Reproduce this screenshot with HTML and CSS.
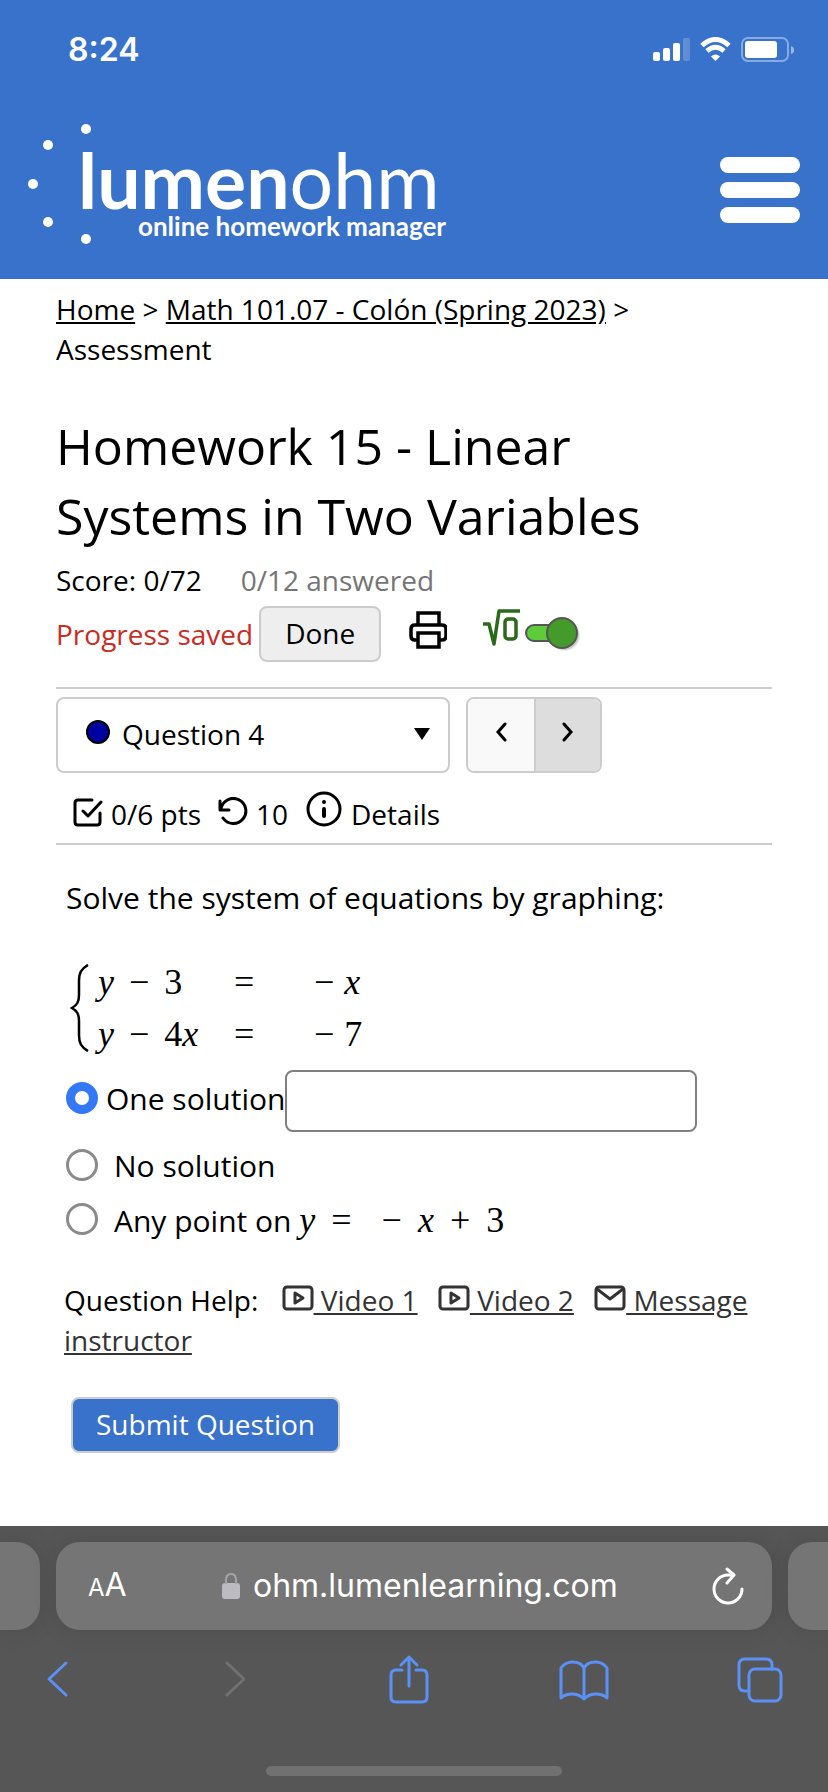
FILE: index.html
```
<!DOCTYPE html>
<html lang="en">
<head>
  <meta charset="UTF-8">
  <meta name="viewport" content="width=device-width, initial-scale=1.0">
  <title>Homework 15 - Linear Systems in Two Variables</title>
  <link rel="stylesheet" href="styles.css">
</head>
<body>
  <header class="header">
    <div class="status">
      <span class="time">8:24</span>
      <svg class="status-icons" width="142" height="26" viewBox="0 0 142 26" fill="#fff">
        <rect x="0" y="15" width="7" height="9" rx="2"/>
        <rect x="10" y="11" width="7" height="13" rx="2"/>
        <rect x="20" y="6" width="7" height="18" rx="2"/>
        <rect x="30" y="1" width="7" height="23" rx="2" opacity=".2"/>
        <path d="M49 8.500Q62.500-3.500 76 8.500" fill="none" stroke="#fff" stroke-width="5"/>
        <path d="M54 14Q62.500 6.500 71 14" fill="none" stroke="#fff" stroke-width="5"/>
        <path d="M58 19.500Q62.500 15.500 67 19.500L62.500 24z"/>
        <rect x="89" y="1" width="46" height="23" rx="6" fill="none" stroke="#fff" stroke-width="2" opacity=".4"/>
        <rect x="92" y="4" width="32" height="17" rx="3"/>
        <path d="M138 9v8q3-1 3-4t-3-4z" opacity=".5"/>
      </svg>
    </div>
    <div class="brand">
      <a class="logo" href="#">
        <svg class="dots" width="64" height="120" viewBox="0 0 64 120" fill="#fff">
          <circle cx="58" cy="5" r="5"/>
          <circle cx="20" cy="21" r="5"/>
          <circle cx="5" cy="60" r="5"/>
          <circle cx="20" cy="98" r="5"/>
          <circle cx="58" cy="115" r="5"/>
        </svg>
        <span class="wordmark">
          <span class="name"><b>lumen</b>ohm</span>
          <span class="tagline">online homework manager</span>
        </span>
      </a>
      <button class="menu" type="button" aria-label="Menu"><i></i><i></i><i></i></button>
    </div>
  </header>

  <main class="main">
    <nav class="breadcrumb"><a href="#">Home</a> &gt; <a href="#">Math 101.07 - Colón (Spring 2023)</a> &gt; Assessment</nav>
    <h1>Homework 15 - Linear Systems in Two Variables</h1>
    <div class="score"><span>Score: 0/72</span><span class="answered">0/12 answered</span></div>

    <div class="actions">
      <span class="saved">Progress saved</span>
      <button class="done" type="button">Done</button>
      <button class="icon-btn print" type="button" aria-label="Print">
        <svg width="38" height="38" viewBox="0 0 38 38" fill="none" stroke="#000" stroke-width="3.500">
          <path d="M9 14V2h21v12"/>
          <path d="M9 29H6q-4 0-4-4v-7q0-4 4-4h27q4 0 4 4v7q0 4-4 4h-3"/>
          <path d="M9 22h21v14H9z"/>
        </svg>
      </button>
      <button class="icon-btn" type="button" aria-label="Equation editor">
        <svg width="98" height="50" viewBox="0 0 98 50" fill="none">
          <path d="M0 19h6l5 20L16 6h21" stroke="#2a6a1a" stroke-width="3.500" stroke-linejoin="round"/>
          <rect x="22" y="14" width="11" height="20" rx="3" stroke="#2a6a1a" stroke-width="3.500"/>
          <circle cx="82" cy="31" r="15" fill="#000" opacity=".08"/>
          <circle cx="81" cy="30" r="15" fill="#000" opacity=".14"/>
          <rect x="43" y="20" width="40" height="16" rx="8" fill="#5dcb3a" stroke="#555" stroke-width="2"/>
          <circle cx="79" cy="28" r="15" fill="#449a2a" stroke="#555" stroke-width="2"/>
        </svg>
      </button>
    </div>

    <section class="question-bar">
      <button class="picker" type="button">
        <svg class="dot" width="24" height="24" viewBox="0 0 24 24"><circle cx="12" cy="12" r="11" fill="#0000a0" stroke="#000" stroke-width="2"/></svg>
        <span>Question 4</span>
        <svg class="caret" width="16" height="12" viewBox="0 0 16 12"><path d="M0 0h16L8 12z"/></svg>
      </button>
      <div class="pager">
        <button type="button" aria-label="Previous question"><svg width="12" height="20" viewBox="0 0 12 20"><path d="M10 2L3 10l7 8"/></svg></button>
        <button class="next" type="button" aria-label="Next question"><svg width="12" height="20" viewBox="0 0 12 20"><path d="M2 2l7 8-7 8"/></svg></button>
      </div>
    </section>

    <div class="details">
      <svg width="30" height="30" viewBox="0 0 30 30"><path d="M19 3H5Q2 3 2 6v19q0 3 3 3h19q3 0 3-3v-9M10 14l5 5L28 5"/></svg>
      <span class="pts">0/6 pts</span>
      <svg width="30" height="30" viewBox="0 0 30 30"><path d="M2 4v9h9M3 12A12.500 12.500 0 1 1 5 21"/></svg>
      <span class="tries">10</span>
      <svg class="info" width="38" height="36" viewBox="0 0 38 36"><circle cx="19" cy="18" r="16"/><path d="M19 18v7M19 11v.1" stroke-width="4"/></svg>
      <span>Details</span>
    </div>

    <form class="question">
      <p class="prompt">Solve the system of equations by graphing:</p>
      <div class="system">
        <svg width="20" height="88" viewBox="0 0 20 88"><path d="M18 1C11 5 9 9 9 17v14c0 7-2 10-7 13 5 3 7 6 7 13v14c0 8 2 12 9 16" fill="none" stroke="#000" stroke-width="2.500"/></svg>
        <div class="equations math">
          <span><i>y</i><span class="op">−</span>3</span><span>=</span><span class="rhs"><span>−</span><i>x</i></span>
          <span><i>y</i><span class="op">−</span>4<i>x</i></span><span>=</span><span class="rhs"><span>−</span>7</span>
        </div>
      </div>
      <div class="choice one">
        <input type="radio" name="answer" id="one" checked><label for="one">One solution</label><input class="point" type="text" aria-label="Solution">
      </div>
      <div class="choice"><input type="radio" name="answer" id="none"><label for="none">No solution</label></div>
      <div class="choice"><input type="radio" name="answer" id="any"><label for="any">Any point on <span class="math inline"><i>y</i><span>=</span><span class="neg">−</span><i>x</i><span>+</span><span>3</span></span></label></div>

      <p class="help">Question Help:
        <a class="first" href="#"><svg width="32" height="26" viewBox="0 0 32 26"><rect x="2" y="2" width="28" height="22" rx="3"/><path d="M13 8v10l8-5z"/></svg> Video 1</a>
        <a href="#"><svg width="32" height="26" viewBox="0 0 32 26"><rect x="2" y="2" width="28" height="22" rx="3"/><path d="M13 8v10l8-5z"/></svg> Video 2</a>
        <a href="#"><svg width="32" height="26" viewBox="0 0 32 26"><rect x="2" y="2" width="28" height="22" rx="3"/><path d="M3 4l13 10L29 4"/></svg> Message instructor</a>
      </p>
      <button class="submit" type="button">Submit Question</button>
    </form>
  </main>

  <footer class="browser">
    <div class="tabs">
      <div class="tab side left"></div>
      <div class="tab address">
        <span class="text-size"><small>A</small>A</span>
        <span class="url">
          <svg width="20" height="28" viewBox="0 0 20 28"><rect x="1" y="11" width="18" height="16" rx="3" fill="#bcbbc1"/><path d="M5 12V8q0-6 5-6t5 6v4" fill="none" stroke="#a5a5a9" stroke-width="2"/></svg>
          ohm.lumenlearning.com
        </span>
        <button class="icon-btn" type="button" aria-label="Reload">
          <svg width="32" height="38" viewBox="0 0 32 38" fill="none" stroke="#fff" stroke-width="3" stroke-linecap="round" stroke-linejoin="round"><path d="M21 8H16A14 14 0 1 0 30 22M15 2l7 6-7 8"/></svg>
        </button>
      </div>
      <div class="tab side right"></div>
    </div>
    <div class="toolbar">
      <button class="icon-btn" type="button" aria-label="Back"><svg width="24" height="50" viewBox="0 0 24 50"><path d="M21 9L4 25l17 16"/></svg></button>
      <button class="icon-btn off" type="button" aria-label="Forward"><svg width="24" height="50" viewBox="0 0 24 50"><path d="M6 9l17 16L6 41"/></svg></button>
      <button class="icon-btn" type="button" aria-label="Share"><svg width="40" height="50" viewBox="0 0 40 50"><path d="M13 16H7q-5 0-5 5v22q0 5 5 5h26q5 0 5-5V21q0-5-5-5h-6M20 32V3M12 11l8-8 8 8"/></svg></button>
      <button class="icon-btn" type="button" aria-label="Bookmarks"><svg width="50" height="50" viewBox="0 0 50 50"><path d="M25 14Q22 8 14 8T2 14v30q4-4 11-4t12 5q5-5 12-5t11 4V14q-4-6-12-6t-11 6v30"/></svg></button>
      <button class="icon-btn" type="button" aria-label="Tabs"><svg width="46" height="50" viewBox="0 0 46 50"><path d="M12 37H8q-6 0-6-6V11q0-6 6-6h21q6 0 6 6v4"/><rect x="12" y="15" width="32" height="32" rx="6"/></svg></button>
    </div>
    <div class="home-indicator"></div>
  </footer>
</body>
</html>
```
FILE: styles.css
```
* { box-sizing: border-box; }
body { margin: 0; min-height: 100vh; display: flex; flex-direction: column; background: #fff; color: #000; font: 28px/40px "Open Sans", "Noto Sans", sans-serif; }
button { font: inherit; color: inherit; cursor: pointer; }
svg { flex: none; display: block; }
h1, p { margin: 0; font-weight: normal; }
.icon-btn { padding: 0; border: 0; background: none; }

/* header */
.header { background: #3972cb; color: #fff; padding-bottom: 35px; }
.status { display: flex; justify-content: space-between; align-items: center; height: 100px; padding: 0 33px 0 68px; }
.time { font: 600 32px/40px Inter, sans-serif; }
.brand { display: flex; justify-content: space-between; align-items: center; padding: 24px 28px 0; }
.logo { display: flex; color: #fff; text-decoration: none; font-family: Lato, sans-serif; }
.wordmark { display: flex; flex-direction: column; margin: 22px 0 0 -14px; }
.name { font-size: 77px; line-height: 66px; font-weight: 400; }
.name b { font-weight: 700; }
.tagline { padding-left: 60px; font-size: 26px; line-height: 28px; font-weight: 700; }
.menu { display: flex; flex-direction: column; gap: 9px; width: 80px; margin-top: 12px; padding: 0; border: 0; background: none; }
.menu i { height: 16px; border-radius: 8px; background: #fff; }

/* assessment heading */
.main { flex: 1; padding: 10px 56px 0; }
.breadcrumb { max-width: 640px; }
.breadcrumb a { color: #000; }
h1 { margin-top: 42px; max-width: 640px; font-size: 50px; line-height: 70px; }
.score { display: flex; gap: 39px; margin-top: 9px; }
.answered { color: #757575; }
.actions { display: flex; align-items: center; height: 56px; margin-top: 6px; }
.saved { color: #c92c22; }
.done { height: 56px; margin: 0 28px 0 6px; padding: 0 24px 2px; background: #eee; border: 2px solid #ccc; border-radius: 8px; }
.print { margin-right: 36px; }
.actions .icon-btn { height: 48px; align-self: flex-start; display: flex; align-items: center; }

/* question picker */
.question-bar { display: flex; gap: 16px; margin-top: 25px; padding-top: 8px; border-top: 2px solid #ccc; }
.picker { display: flex; align-items: center; gap: 12px; width: 394px; height: 76px; padding: 0 18px 2px 28px; background: #fff; border: 2px solid #ccc; border-radius: 8px; }
.dot { margin-bottom: 4px; }
.caret { margin-left: auto; }
.pager { display: flex; border: 2px solid #ccc; border-radius: 8px; overflow: hidden; }
.pager button { display: grid; place-items: center; width: 66px; padding: 0 0 6px; border: 0; background: #f9f9f9; }
.pager .next { background: #ddd; border-left: 2px solid #ccc; }
.pager path { fill: none; stroke: #000; stroke-width: 3; stroke-linecap: round; }
.details { display: flex; align-items: flex-end; height: 72px; padding: 0 17px 9px; border-bottom: 2px solid #ccc; }
.details svg { margin: 0 8px 7px 0; fill: none; stroke: #000; stroke-width: 3; stroke-linecap: round; stroke-linejoin: round; }
.pts, .tries { margin-right: 17px; }

/* question */
.question { padding: 33px 8px 0; }
.prompt, .choice { font-size: 30px; padding-left: 2px; }
.math { font-family: "Liberation Serif", serif; font-size: 36px; }
.system { display: flex; align-items: center; gap: 8px; margin: 38px 0 10px; padding-left: 6px; height: 104px; }
.equations { display: grid; grid-template-columns: 136px 80px auto; line-height: 52px; }
.op { margin: 0 15px; }
.rhs { display: flex; gap: 10px; }
.choice { display: flex; align-items: center; height: 54px; }
.choice input[type=radio] { appearance: none; flex: none; width: 32px; height: 32px; margin: 0 16px 2px 0; border: 3px solid #8a8a8a; border-radius: 50%; background: #fff; }
.choice input[type=radio]:checked { border: 9px solid #3478f6; margin-right: 8px; }
.one { height: 62px; margin-bottom: 7px; }
.one label { padding-bottom: 4px; }
.choice.one input[type=radio] { margin-bottom: 6px; }
.point { width: 412px; height: 62px; padding: 0 10px; border: 2px solid #808080; border-radius: 8px; font: inherit; }
.inline { display: inline-flex; gap: 16px; }
.neg { margin-left: 14px; }
.help { margin-top: 33px; }
.help a { color: #333; margin-left: 13px; }
.help .first { margin-left: 16px; }
.help svg { display: inline-block; vertical-align: baseline; fill: none; stroke: #333; stroke-width: 3; stroke-linejoin: round; }
.submit { height: 56px; margin: 37px 0 0 7px; padding: 0 23px 2px; background: #3972cb; color: #fff; border: 2px solid #ccc; border-radius: 8px; }

/* browser chrome */
.browser { height: 266px; padding-top: 16px; background: #565656; color: #fff; font: 32px/40px Inter, sans-serif; }
.tabs { display: flex; gap: 16px; height: 88px; }
.tab { background: #757575; box-shadow: 0 0 24px rgba(0, 0, 0, .1); }
.side { width: 40px; }
.left { border-radius: 0 24px 24px 0; }
.right { border-radius: 24px 0 0 24px; }
.address { flex: 1; display: flex; align-items: center; justify-content: space-between; padding: 0 28px 0 32px; border-radius: 24px; }
.text-size small { font-size: 24px; }
.url { display: flex; align-items: center; gap: 12px; }
.toolbar { display: flex; justify-content: space-between; padding: 24px 42px 0 31px; }
.toolbar button { display: grid; justify-items: center; width: 52px; }
.toolbar svg { fill: none; stroke: #5a91f7; stroke-width: 3; stroke-linecap: round; stroke-linejoin: round; }
.toolbar .off svg { stroke: #717171; }
.home-indicator { width: 296px; height: 10px; margin: 62px auto 0; border-radius: 5px; background: #717171; }
```
